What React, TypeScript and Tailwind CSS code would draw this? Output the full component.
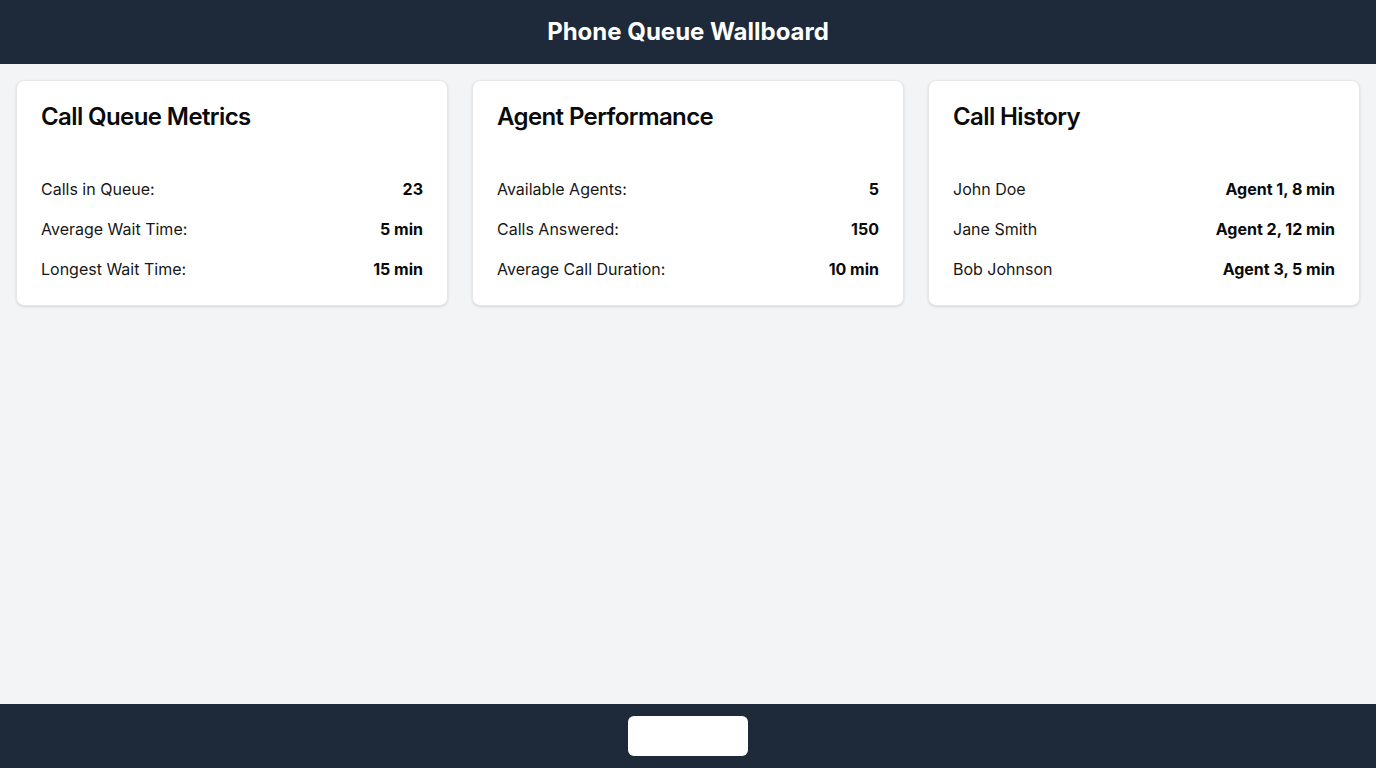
import React from "react";

type Row = { label: string; value: string };

const cards: { title: string; rows: Row[] }[] = [
  {
    title: "Call Queue Metrics",
    rows: [
      { label: "Calls in Queue:", value: "23" },
      { label: "Average Wait Time:", value: "5 min" },
      { label: "Longest Wait Time:", value: "15 min" },
    ],
  },
  {
    title: "Agent Performance",
    rows: [
      { label: "Available Agents:", value: "5" },
      { label: "Calls Answered:", value: "150" },
      { label: "Average Call Duration:", value: "10 min" },
    ],
  },
  {
    title: "Call History",
    rows: [
      { label: "John Doe", value: "Agent 1, 8 min" },
      { label: "Jane Smith", value: "Agent 2, 12 min" },
      { label: "Bob Johnson", value: "Agent 3, 5 min" },
    ],
  },
];

function Card({ title, rows }: { title: string; rows: Row[] }) {
  return (
    <div className="rounded-lg border border-gray-200 bg-white p-6 shadow-sm">
      <h2 className="mb-12 text-2xl font-semibold leading-none tracking-tight text-neutral-950">
        {title}
      </h2>
      <div className="flex flex-col gap-4">
        {rows.map((r) => (
          <div key={r.label} className="flex items-center justify-between text-base leading-6 text-neutral-900">
            <span>{r.label}</span>
            <span className="font-bold text-neutral-950">{r.value}</span>
          </div>
        ))}
      </div>
    </div>
  );
}

export default function App() {
  return (
    <div
      className="flex min-h-screen flex-col bg-gray-100"
      style={{ fontFamily: "Inter, 'Noto Sans', sans-serif" }}
    >
      {/* Header */}
      <header className="flex h-16 shrink-0 items-center justify-center bg-gray-800">
        <h1 className="text-2xl font-bold text-white">Phone Queue Wallboard</h1>
      </header>

      {/* Cards */}
      <main className="grid flex-1 grid-cols-3 items-start gap-6 p-4">
        {cards.map((c) => (
          <Card key={c.title} title={c.title} rows={c.rows} />
        ))}
      </main>

      {/* Footer */}
      <footer className="flex h-16 shrink-0 items-center justify-center bg-gray-800">
        <button className="h-10 w-[120px] rounded-md bg-white" />
      </footer>
    </div>
  );
}
